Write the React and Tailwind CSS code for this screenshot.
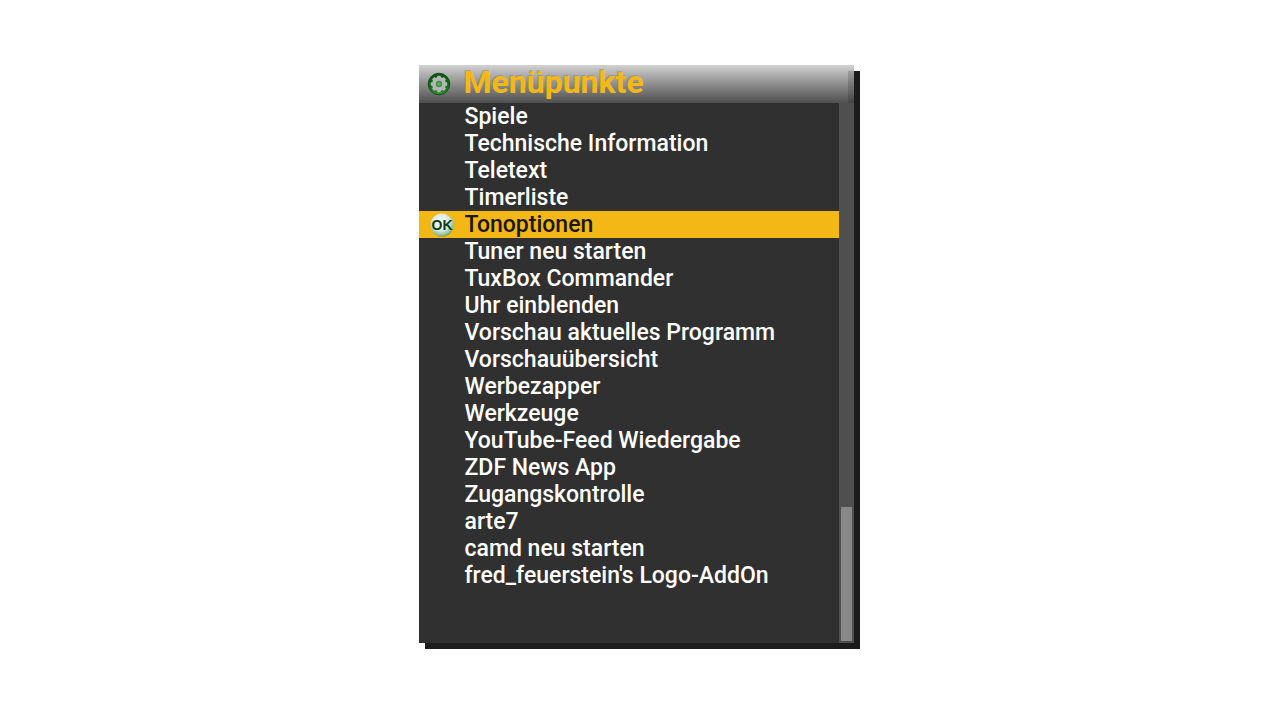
const items = [
  'Spiele',
  'Technische Information',
  'Teletext',
  'Timerliste',
  'Tonoptionen',
  'Tuner neu starten',
  'TuxBox Commander',
  'Uhr einblenden',
  'Vorschau aktuelles Programm',
  'Vorschauübersicht',
  'Werbezapper',
  'Werkzeuge',
  'YouTube-Feed Wiedergabe',
  'ZDF News App',
  'Zugangskontrolle',
  'arte7',
  'camd neu starten',
  "fred_feuerstein's Logo-AddOn",
];
const selected = 'Tonoptionen';
const teeth = [0, 45, 90, 135, 180, 225, 270, 315];

function GearIcon() {
  return (
    <svg viewBox="0 0 24 24" className="size-6 shrink-0" aria-hidden="true">
      <defs>
        <linearGradient id="gearDisc" x1="0" y1="0" x2="0" y2="1">
          <stop offset="0" stopColor="#0f5212" />
          <stop offset="0.6" stopColor="#126b17" />
          <stop offset="1" stopColor="#2f9237" />
        </linearGradient>
      </defs>
      <circle cx="12" cy="12" r="10.8" fill="url(#gearDisc)" stroke="#0c4512" strokeWidth="0.8" />
      <g fill="#b4b8b4">
        {teeth.map((a) => (
          <rect key={a} x="10.2" y="3.8" width="3.6" height="4" rx="0.6" transform={`rotate(${a} 12 12)`} />
        ))}
        <circle cx="12" cy="12" r="7" />
      </g>
      <circle cx="12" cy="12" r="3.2" fill="#3d8f45" />
      <circle cx="12" cy="12" r="1.8" fill="#62ab68" />
    </svg>
  );
}

function OkIcon() {
  return (
    <svg viewBox="0 0 24 24" className="size-6 shrink-0" aria-hidden="true">
      <defs>
        <radialGradient id="okBall" cx="0.45" cy="0.38" r="0.66">
          <stop offset="0" stopColor="#ffffff" />
          <stop offset="0.55" stopColor="#dcebdc" />
          <stop offset="0.85" stopColor="#8fbd92" />
          <stop offset="1" stopColor="#4c8a50" />
        </radialGradient>
      </defs>
      <circle cx="12" cy="12" r="11.6" fill="url(#okBall)" />
      <text
        x="12"
        y="17"
        textAnchor="middle"
        fill="#0d3a18"
        className="font-['Liberation_Sans',sans-serif] text-[14px] font-bold"
      >
        OK
      </text>
    </svg>
  );
}

export default function App() {
  return (
    <main className="flex min-h-screen items-start justify-center bg-white px-4 pt-[65px] pb-8 font-['Roboto',sans-serif]">
      <section
        aria-labelledby="menu-title"
        className="mr-2 w-full max-w-[435px] bg-[#303030] shadow-[6px_6px_0_0_#1c1c1c]"
      >
        <header className="flex h-[38px] items-stretch bg-linear-to-b from-[#d2d2d2] to-[#505050]">
          <div className="flex min-w-0 flex-1 items-center gap-[13px] pl-2">
            <GearIcon />
            <h1
              id="menu-title"
              className="pb-1 text-[32px] leading-[34px] font-bold text-[#f3b716] [text-shadow:-1px_-1px_0_#77777766]"
            >
              Menüpunkte
            </h1>
          </div>
          <div className="mt-1.5 w-1.5 bg-black/15" />
        </header>
        <div className="flex">
          <ul className="min-w-0 flex-1 pb-[54px]">
            {items.map((item) => (
              <li key={item}>
                <button
                  type="button"
                  className={
                    item === selected
                      ? 'flex h-[27px] w-full items-center bg-[#f3b716] text-left text-[23px] leading-[27px] font-medium whitespace-nowrap text-[#1a1604]'
                      : 'flex h-[27px] w-full items-center text-left text-[23px] leading-[27px] font-medium whitespace-nowrap text-white'
                  }
                >
                  <span className="flex w-[46px] shrink-0 pl-[11px]">{item === selected && <OkIcon />}</span>
                  {item}
                </button>
              </li>
            ))}
          </ul>
          <div className="flex w-[15px] flex-col justify-end bg-[#4f4f4f] p-0.5">
            <div className="h-1/4 w-[11px] bg-[#888888]" />
          </div>
        </div>
      </section>
    </main>
  );
}
